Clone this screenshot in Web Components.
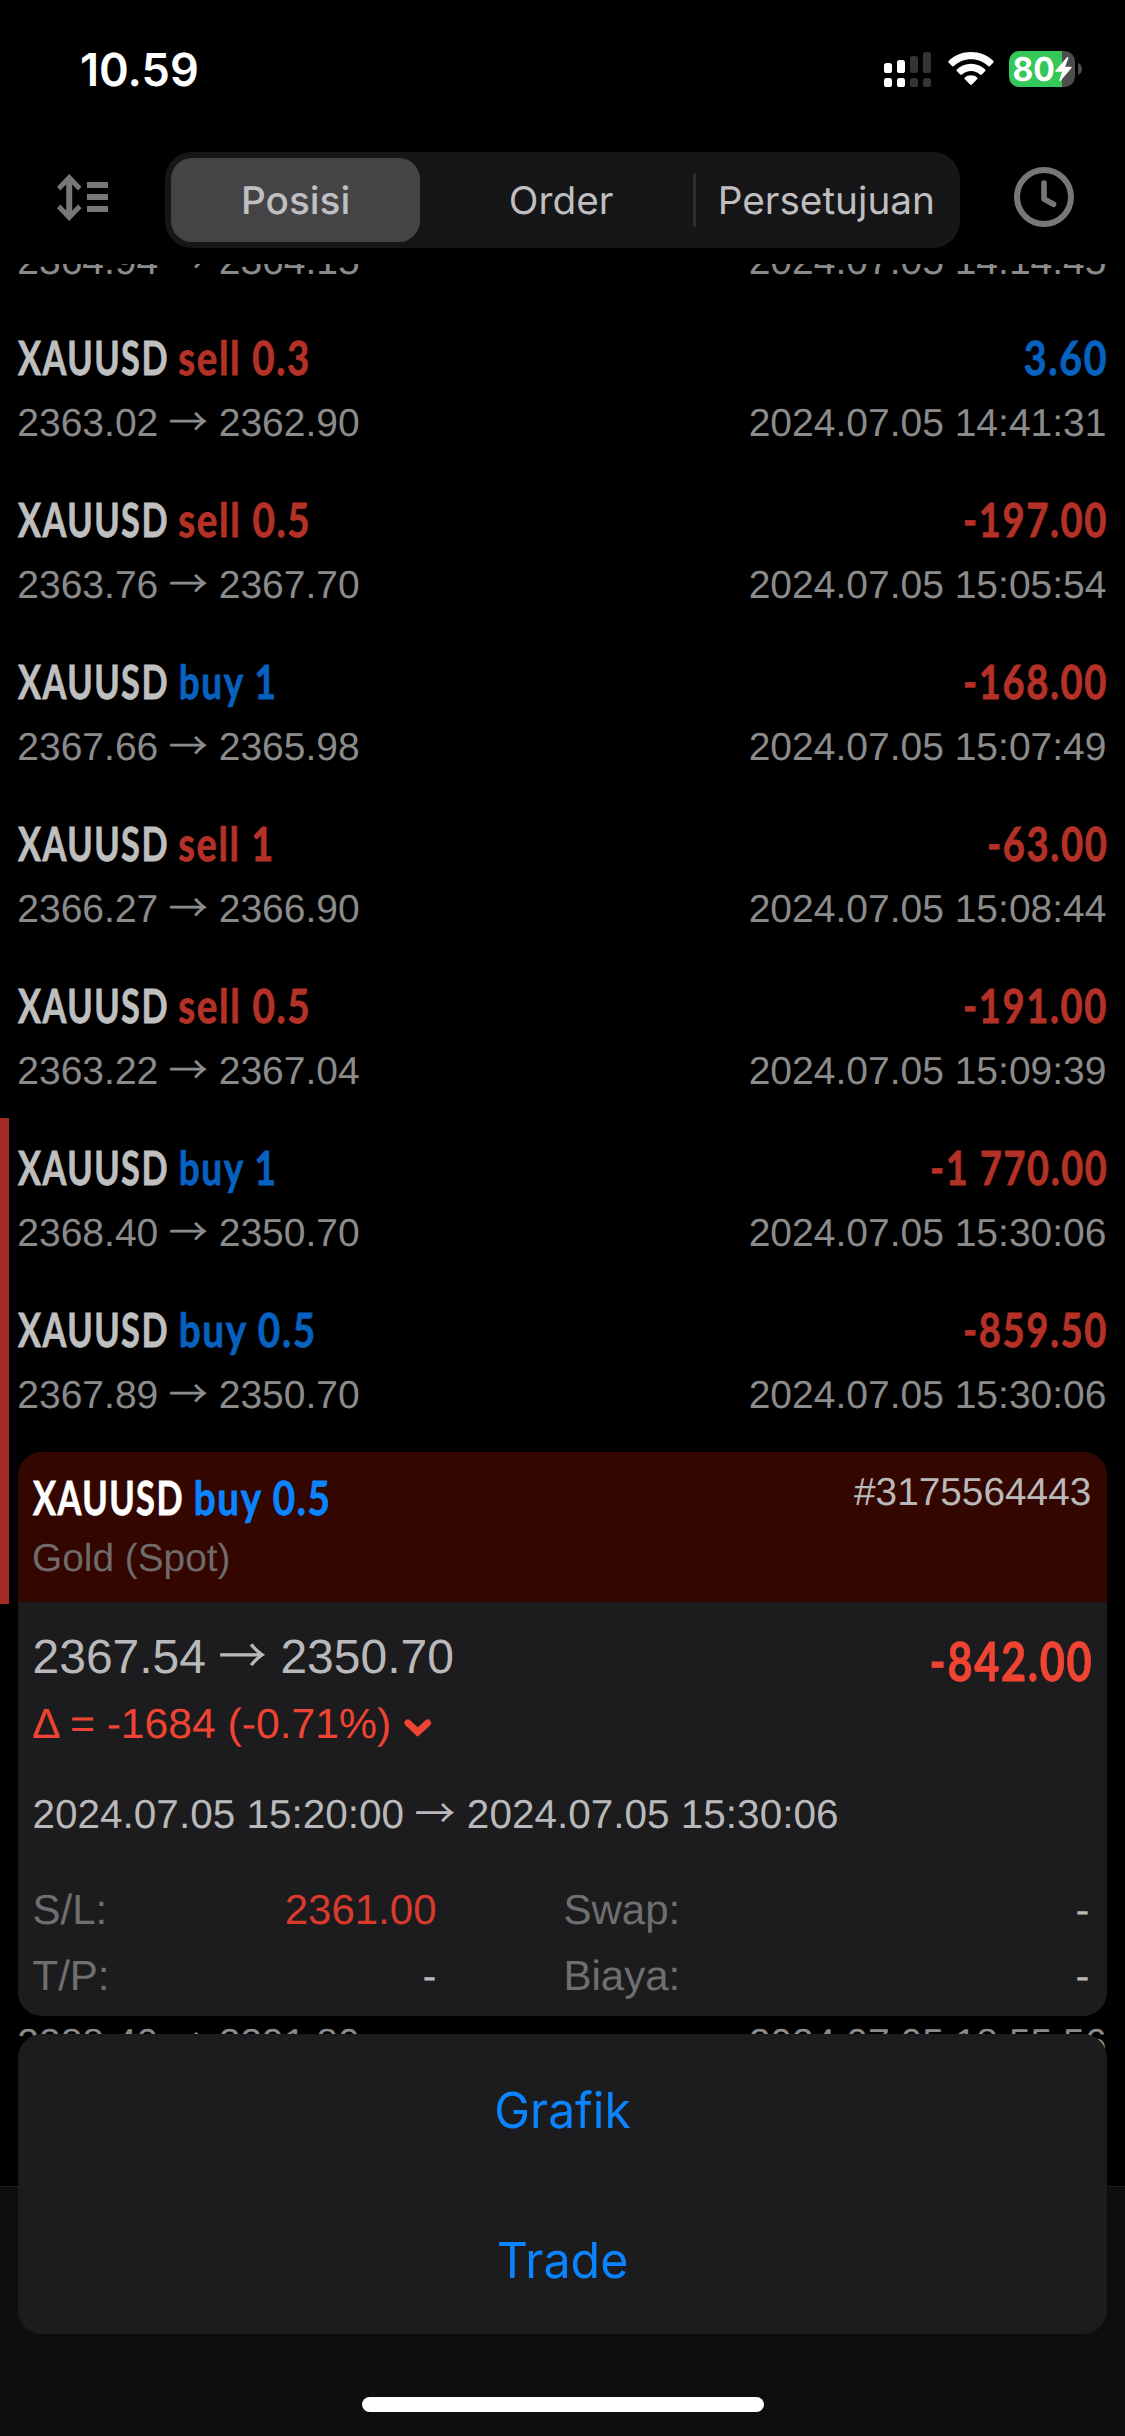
<!DOCTYPE html>
<html lang="id">
<head>
<meta charset="utf-8">
<title>Posisi</title>
<style>
html, body { margin: 0; background: #000; }
body { width: 1125px; height: 2436px; overflow: hidden; text-rendering: geometricPrecision; -webkit-font-smoothing: antialiased; }
</style>
</head>
<body>
<trade-screen></trade-screen>
<script>
const UI = '"Inter", sans-serif';
const HELV = '"Liberation Sans", Arial, sans-serif';
const COND = '"Lato", sans-serif';
const ctx = document.createElement('canvas').getContext('2d');

class Base extends HTMLElement {
  connectedCallback() {
    if (this.shadowRoot) return;
    this.attachShadow({ mode: 'open' }).innerHTML = this.view();
    if (this.ready) this.ready();
  }
  a(name, fallback = '') { return this.getAttribute(name) ?? fallback; }
}

/* A run of text whose box is its cap height; with "w" the run is condensed to that ink width. */
customElements.define('ink-text', class extends Base {
  view() {
    return `<style>
      :host{display:block;flex:none;white-space:pre;line-height:1}
      span{display:inline-block;transform-origin:0 0;white-space:pre}
      i{display:inline-block;width:0;height:0}
    </style><span><slot></slot><i></i></span>`;
  }
  ready() {
    const h = +this.a('h', 28), span = this.shadowRoot.querySelector('span'), mark = this.shadowRoot.querySelector('i');
    this.style.height = h + 'px';
    const box = span.getBoundingClientRect();
    const host = this.getBoundingClientRect();
    const base = mark.getBoundingClientRect().bottom - host.top;
    let sx = 1, tx = 0, w = box.width;
    if (this.hasAttribute('w')) {
      w = +this.a('w');
      const cs = getComputedStyle(this);
      ctx.font = `${cs.fontWeight} 200px ${cs.fontFamily}`;
      const m = ctx.measureText(this.textContent), k = parseFloat(cs.fontSize) / 200;
      const gaps = (parseFloat(cs.letterSpacing) || 0) * (this.textContent.length - 1);
      sx = w / ((m.actualBoundingBoxRight + m.actualBoundingBoxLeft) * k + gaps);
      tx = m.actualBoundingBoxLeft * k * sx;
    }
    this.style.width = w + 'px';
    span.style.transform = `matrix(${sx},0,0,1,${tx},${h - base})`;
  }
});

customElements.define('status-bar', class extends Base {
  view() {
    return `<style>
      :host{display:flex;justify-content:space-between;height:132px;box-sizing:border-box;padding:51px 43px 0 82px;color:#fff;font-family:${UI}}
      .time{font-size:45.5px;font-weight:600;margin-top:1.5px}
      .right{display:flex;align-items:flex-start}
      .bat{position:relative;display:flex;align-items:flex-start;margin-left:15px;width:73px;height:36px}
      .bat svg{position:absolute;inset:0}
      .bat ink-text{position:relative;font:700 33px ${UI};margin:6px 0 0 5px}
    </style>
    <ink-text class="time" w="114.5" h="33">10.59</ink-text>
    <div class="right">
      <svg width="47" height="36" viewBox="0 0 47 36">
        <g fill="#fff"><rect y="12" width="8" height="10" rx="2.6"/><rect x="13" y="9" width="8" height="13" rx="2.6"/><rect y="27" width="8" height="9" rx="2.6"/><rect x="13" y="27" width="8" height="9" rx="2.6"/></g>
        <g fill="#343434"><rect x="26" y="5" width="8" height="17" rx="2.6"/><rect x="39" y="1" width="8" height="21" rx="2.6"/><rect x="26" y="27" width="8" height="9" rx="2.6"/><rect x="39" y="27" width="8" height="9" rx="2.6"/></g>
      </svg>
      <svg style="margin-left:17px" width="46" height="36" viewBox="0 0 46 36" fill="#fff">
        <path d="M23 1C31.6 1 39.4 4.300 45.200 9.800C45.800 10.400 45.800 11.200 45.200 11.800L42 15C41.400 15.600 40.700 15.600 40.100 15C35.600 10.800 29.600 8.300 23 8.300S10.400 10.800 5.900 15C5.300 15.600 4.600 15.600 4 15L.8 11.800C.2 11.200.2 10.400.8 9.800C6.600 4.300 14.400 1 23 1Z"/>
        <path d="M23 12.700C28.400 12.700 33.300 14.800 37 18.200C37.600 18.800 37.600 19.600 37 20.200L33.800 23.400C33.200 24 32.500 24 31.900 23.500C29.500 21.400 26.400 20.100 23 20.100S16.500 21.400 14.100 23.500C13.500 24 12.800 24 12.200 23.400L9 20.200C8.400 19.600 8.400 18.800 9 18.200C12.700 14.800 17.600 12.700 23 12.700Z"/>
        <path d="M23 24.200C25.400 24.200 27.500 25.100 29.100 26.500C29.700 27 29.700 27.700 29.100 28.300L23.900 33.600C23.300 34.200 22.700 34.200 22.100 33.600L16.900 28.300C16.300 27.700 16.300 27 16.900 26.500C18.500 25.100 20.600 24.200 23 24.200Z"/>
      </svg>
      <div class="bat">
        <svg width="73" height="36" viewBox="0 0 73 36">
          <clipPath id="b"><rect width="66" height="36" rx="10.500"/></clipPath>
          <g clip-path="url(#b)"><rect width="66" height="36" fill="#4d4d4d"/><rect width="53" height="36" fill="#34c759"/></g>
          <path d="M69 12C74.300 13.500 74.300 22.500 69 24Z" fill="#4d4d4d"/>
          <path d="M57.800 6.500L46.600 19.400C46 20.200 46.400 20.700 47.200 20.700H53.200L50.300 28.900C50 30.100 51 30.500 51.800 29.600L62.300 17.300C63 16.500 62.500 15.800 61.700 15.800H56.100L59.200 7.400C59.600 6.200 58.600 5.600 57.800 6.500Z" fill="#fff"/>
        </svg>
        <ink-text w="39.500" h="24">80</ink-text>
      </div>
    </div>`;
  }
});

customElements.define('segment-item', class extends Base {
  view() {
    return `<style>
      :host{display:flex;flex:1;align-items:flex-start;justify-content:center;box-sizing:border-box;padding-top:29px;border-radius:21px;height:84px;font:400 38px ${UI};color:#bfbfbf}
      :host([on]){background:#444446;font-weight:500}
    </style><ink-text w="${this.a('w')}" h="27">${this.a('label')}</ink-text>`;
  }
});

customElements.define('nav-bar', class extends Base {
  view() {
    return `<style>
      :host{display:flex;height:132px;box-sizing:border-box;padding:20px 50px 0 57px;align-items:flex-start}
      .seg{display:flex;width:795px;height:96px;box-sizing:border-box;padding:6px;background:#161618;border-radius:27px;margin:0 54px 0 56px}
      segment-item:nth-child(1){flex:0 0 249px}
      segment-item:nth-child(2){flex:0 0 273px;padding-left:10px}
      segment-item:nth-child(4){padding-left:3px}
      hr{border:0;margin:15px 0 0;width:3px;height:54px;border-radius:2px;background:#2e2e30}
      svg{flex:none}
    </style>
    <svg width="52" height="48" viewBox="0 0 52 48" style="margin-top:22px" fill="#777">
      <path d="M12.200 0L24.500 12.700L21.200 16.500L15.200 10.600V36.400L21.200 30.500L24.500 34.300L12.200 47L0 34.300L3.300 30.500L9.200 36.400V10.600L3.300 16.500L0 12.700Z"/>
      <path d="M30 8H51V14H30ZM30 20H51V26H30ZM30 32H51V38H30Z"/>
    </svg>
    <div class="seg">
      <segment-item on label="Posisi" w="104"></segment-item>
      <segment-item label="Order" w="101.600"></segment-item>
      <hr>
      <segment-item label="Persetujuan" w="211"></segment-item>
    </div>
    <svg width="61" height="61" viewBox="0 0 61 61" style="margin-top:15px" fill="none" stroke="#777" stroke-width="6" stroke-linecap="round" stroke-linejoin="round">
      <circle cx="30" cy="30" r="27"/><path d="M30 16V32L39.500 37.300" stroke-width="5.600"/>
    </svg>`;
  }
});

/* "from → to" */
customElements.define('range-text', class extends Base {
  view() {
    const s = +this.a('size', 39), h = this.a('h', 28);
    return `<style>
      :host{display:flex;font:400 ${s}px ${HELV}}
      .ar{font-family:"Noto Sans CJK JP",sans-serif;font-weight:400;margin:0 ${s * .31}px 0 ${s * .3}px}
    </style><ink-text h="${h}">${this.a('from')}</ink-text><ink-text class="ar" w="${s * .94}" h="${h}">→</ink-text><ink-text h="${h}">${this.a('to')}</ink-text>`;
  }
});

/* symbol + side */
customElements.define('deal-title', class extends Base {
  view() {
    const side = this.a('side');
    return `<style>
      :host{display:flex;font:700 47px ${COND};letter-spacing:2px;-webkit-text-stroke:.8px currentColor}
      .side{margin-left:${side[0] === 's' ? 12.5 : 14.3}px;color:${side[0] === 's' ? 'var(--sell)' : 'var(--buy)'};-webkit-text-stroke-color:${side[0] === 's' ? 'var(--sell)' : 'var(--buy)'}}
    </style><ink-text w="148.300" h="34">XAUUSD</ink-text><ink-text class="side" w="${this.a('w')}" h="34">${side}</ink-text>`;
  }
});

customElements.define('position-row', class extends Base {
  view() {
    const p = this.a('profit');
    return `<style>
      :host{display:flex;flex-direction:column;flex:none;height:162px;box-sizing:border-box;padding:33px 19.500px 0 9.300px;gap:33px;border-left:9px solid transparent;color:#bfbfbf;--sell:#b43127;--buy:#0761bf}
      :host([hit]){border-left-color:#a32d24}
      div{display:flex;justify-content:space-between}
      .p{font:700 47px ${COND};letter-spacing:2px;color:${p[0] === '-' ? '#b43127' : '#0761bf'};-webkit-text-stroke:.8px ${p[0] === '-' ? '#b43127' : '#0761bf'}}
      .d{color:#8b8b8b;margin:0 -1px 0 -1px;font:400 39px ${HELV}}
    </style>
    <div><deal-title side="${this.a('side')}" w="${this.a('sw')}"></deal-title><ink-text class="p" w="${this.a('pw')}" h="34">${p}</ink-text></div>
    <div class="d"><range-text from="${this.a('from')}" to="${this.a('to')}"></range-text><ink-text>${this.a('time')}</ink-text></div>`;
  }
});

customElements.define('position-list', class extends Base {
  view() {
    const rows = [
      ['sell 0.3', 128.5, '3.60', 80.5, '2363.02', '2362.90', '14:41:31'],
      ['sell 0.5', 128.5, '-197.00', 140.5, '2363.76', '2367.70', '15:05:54'],
      ['buy 1', 93.5, '-168.00', 140.5, '2367.66', '2365.98', '15:07:49'],
      ['sell 1', 92, '-63.00', 117, '2366.27', '2366.90', '15:08:44'],
      ['sell 0.5', 128.5, '-191.00', 140.5, '2363.22', '2367.04', '15:09:39'],
      ['buy 1', 93.5, '-1 770.00', 173.8, '2368.40', '2350.70', '15:30:06', 'hit'],
      ['buy 0.5', 133, '-859.50', 140.5, '2367.89', '2350.70', '15:30:06', 'hit']
    ];
    return `<style>
      :host{display:flex;flex-direction:column;flex:1;overflow:hidden;min-height:0}
      .edge{display:flex;justify-content:space-between;flex:none;height:28px;padding:0 18.500px 0 17.300px;font:400 39px ${HELV};color:#8b8b8b}
      .first{margin:-18px 0 34px}
      .under{flex:none;height:162px;box-sizing:border-box;border-left:9px solid #a32d24}
      .last{margin-top:424px}
    </style>
    <div class="edge first"><range-text from="2364.94" to="2364.15"></range-text><ink-text>2024.07.05 14:14:45</ink-text></div>
    ${rows.map(r => `<position-row side="${r[0]}" sw="${r[1]}" profit="${r[2]}" pw="${r[3]}" from="${r[4]}" to="${r[5]}" time="2024.07.05 ${r[6]}" ${r[7] || ''}></position-row>`).join('')}
    <div class="under"></div>
    <div class="edge last"><range-text from="2388.40" to="2391.80"></range-text><ink-text>2024.07.05 18:55:56</ink-text></div>`;
  }
});

customElements.define('field-pair', class extends Base {
  view() {
    return `<style>
      :host{display:flex;justify-content:space-between;font:400 42px ${HELV};color:#6f6f70}
      .v{color:${this.a('tone', '#b9b9bb')}}
    </style><ink-text h="30">${this.a('label')}</ink-text><ink-text class="v" h="30">${this.a('value', '-')}</ink-text>`;
  }
});

customElements.define('position-card', class extends Base {
  view() {
    return `<style>
      :host{display:block;height:564px;border-radius:24px;overflow:hidden;background:#1c1c1e;color:#b9b9bb;font:400 39px ${HELV};--buy:#0a84ff}
      header{display:flex;justify-content:space-between;height:150px;box-sizing:border-box;padding:25px 17px 0 15.300px;background:#330600}
      .name{display:flex;flex-direction:column;gap:28px;padding-top:4px}
      deal-title{color:#fff}
      .g{color:#706b6a;margin-left:1.200px}
      .body{display:flex;flex-direction:column;padding:37px 15px 0 14.500px}
      .row{display:flex;justify-content:space-between}
      .pl{font:700 54px ${COND};letter-spacing:2px;-webkit-text-stroke:.8px #f04432;color:#f04432;margin:3px 2px 0 0}
      .delta{display:flex;font-size:42px;color:#f04432;margin-top:27.500px}
      .delta svg{margin:10.500px 0 0 13.500px}
      .dates{margin-top:62.500px}
      .fields{display:grid;grid-template-columns:404px 526px;column-gap:127px;row-gap:36px;margin-top:66px}
    </style>
    <header>
      <div class="name"><deal-title side="buy 0.5" w="132.800"></deal-title><ink-text class="g" w="194.200">Gold (Spot)</ink-text></div>
      <ink-text w="235.700">#3175564443</ink-text>
    </header>
    <div class="body">
      <div class="row"><range-text size="48" h="34" from="2367.54" to="2350.70"></range-text><ink-text class="pl" w="158.500" h="39">-842.00</ink-text></div>
      <div class="delta"><ink-text w="358" h="29">Δ = -1684 (-0.71%)</ink-text><svg width="28" height="18" viewBox="0 0 28 18"><path d="M4 4L13.700 13L23.600 4" fill="none" stroke="#f04432" stroke-width="7" stroke-linecap="round"/></svg></div>
      <range-text class="dates" size="40.500" from="2024.07.05 15:20:00" to="2024.07.05 15:30:06"></range-text>
      <div class="fields">
        <field-pair label="S/L:" value="2361.00" tone="#da3a2c"></field-pair><field-pair label="Swap:"></field-pair>
        <field-pair label="T/P:"></field-pair><field-pair label="Biaya:"></field-pair>
      </div>
    </div>`;
  }
});

customElements.define('action-sheet', class extends Base {
  view() {
    return `<style>
      :host{display:flex;flex-direction:column;height:300px;border-radius:24px;background:#1c1c1e;color:#0a84ff;font:400 49.500px ${UI}}
      div{display:flex;height:150px;box-sizing:border-box;padding-top:58px;justify-content:center}
    </style>
    <div style="padding-left:3px"><ink-text w="133.300" h="36">Grafik</ink-text></div><div><ink-text w="127" h="36">Trade</ink-text></div>`;
  }
});

customElements.define('trade-screen', class extends Base {
  view() {
    return `<style>
      :host{display:flex;flex-direction:column;position:relative;width:1125px;height:2436px;overflow:hidden;background:#000}
      footer{height:250px;box-sizing:border-box;background:#0e0e0e;border-top:1px solid #1f1f1f}
      .over{position:absolute;inset:0;display:flex;flex-direction:column;justify-content:flex-end;padding:0 18px 24px;gap:18px}
      .home{width:402px;height:15px;border-radius:8px;background:#fff;align-self:center;margin-top:45px}
    </style>
    <status-bar></status-bar><nav-bar></nav-bar><position-list></position-list><footer></footer>
    <div class="over"><position-card></position-card><action-sheet></action-sheet><div class="home"></div></div>`;
  }
});
</script>
</body>
</html>
